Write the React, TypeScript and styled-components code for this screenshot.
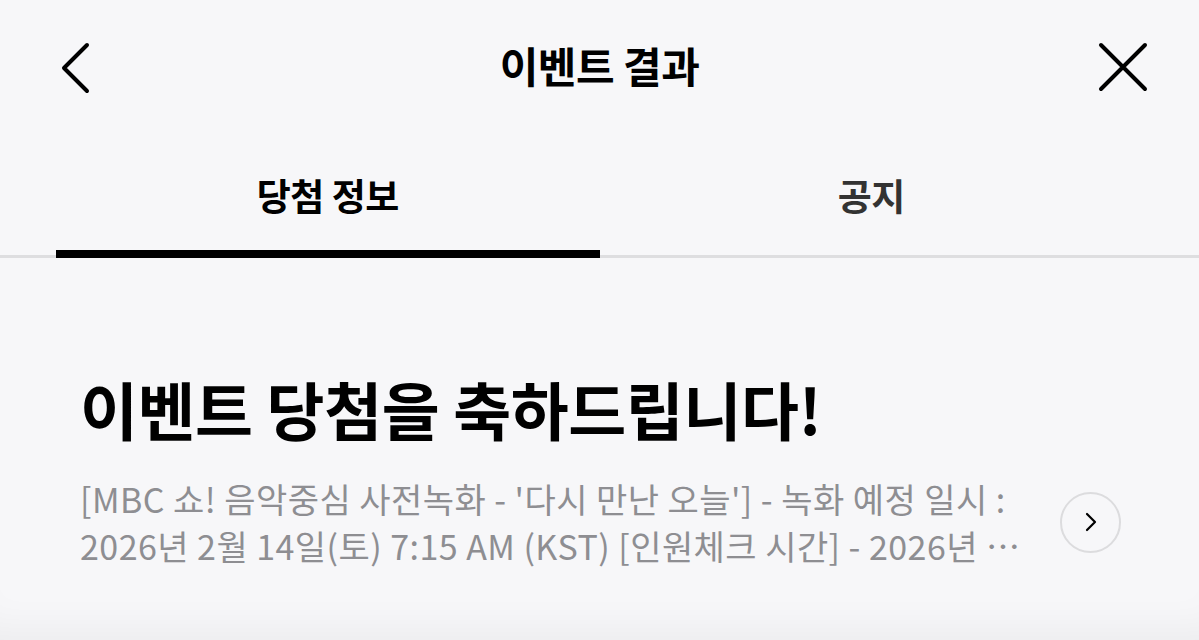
import React from "react";
import styled, { createGlobalStyle } from "styled-components";

const GlobalStyle = createGlobalStyle`
    html, body {
        margin: 0;
        padding: 0;
        background: #f7f7f9;
    }
    body {
        font-family: "Noto Sans CJK KR", "Noto Sans", sans-serif;
        color: #000;
    }
`;

const Page = styled.div`
    width: 1199px;
    height: 640px;
    overflow: hidden;
    background: #f7f7f9;
    display: flex;
    flex-direction: column;
`;

const Header = styled.header`
    height: 134px;
    display: grid;
    grid-template-columns: 1fr auto 1fr;
    align-items: center;
    padding: 0 48px;
`;

const IconButton = styled.button<{ $align: "start" | "end" }>`
    justify-self: ${(p) => p.$align};
    width: 56px;
    height: 56px;
    padding: 0;
    border: none;
    background: none;
    display: flex;
    align-items: center;
    justify-content: center;
    cursor: pointer;
`;

const Title = styled.h1`
    margin: 0;
    font-size: 42px;
    font-weight: 700;
    letter-spacing: -0.5px;
    line-height: 1;
    padding-bottom: 4px;
`;

const Tabs = styled.nav`
    display: flex;
    padding: 0 56px;
    border-bottom: 3px solid #dedee0;
    height: 121px;
`;

const Tab = styled.button<{ $active?: boolean }>`
    flex: 1;
    border: none;
    background: none;
    padding: 0;
    font-family: inherit;
    font-size: 37px;
    font-weight: 700;
    letter-spacing: -0.5px;
    color: ${(p) => (p.$active ? "#000" : "#333")};
    position: relative;
    cursor: pointer;
    &::after {
        content: "";
        position: absolute;
        left: 0;
        right: 0;
        bottom: -3px;
        height: 8px;
        background: ${(p) => (p.$active ? "#000" : "transparent")};
    }
`;

const Content = styled.section`
    flex: 1;
    padding: 110px 78px 0 80px;
    box-shadow: inset 0 -40px 40px -30px rgba(0, 0, 0, 0.05);
`;

const Heading = styled.h2`
    margin: 0 0 27px;
    font-size: 63px;
    font-weight: 700;
    letter-spacing: -0.4px;
    line-height: 80px;
`;

const Row = styled.div`
    display: flex;
    align-items: center;
    gap: 32px;
`;

const Desc = styled.p`
    margin: 0;
    flex: 1;
    font-size: 34px;
    line-height: 47px;
    color: #8e8e92;
    letter-spacing: 0.45px;
    display: -webkit-box;
    -webkit-line-clamp: 2;
    -webkit-box-orient: vertical;
    overflow: hidden;
`;

const CircleButton = styled.button`
    flex: none;
    width: 61px;
    height: 61px;
    border-radius: 50%;
    border: 2px solid #dcdcde;
    background: #f7f7f9;
    display: flex;
    align-items: center;
    justify-content: center;
    padding: 0;
    cursor: pointer;
`;

export default function App() {
    return (
        <Page>
            <GlobalStyle />
            <Header>
                <IconButton $align="start" aria-label="뒤로">
                    <svg width="56" height="56" viewBox="0 0 56 56" fill="none">
                        <path
                            d="M39 6 L16 29 L39 52"
                            stroke="#000"
                            strokeWidth="4"
                            strokeLinecap="round"
                            strokeLinejoin="round"
                        />
                    </svg>
                </IconButton>
                <Title>이벤트 결과</Title>
                <IconButton $align="end" aria-label="닫기">
                    <svg width="56" height="56" viewBox="0 0 56 56" fill="none">
                        <path
                            d="M6 6 L50 50 M50 6 L6 50"
                            stroke="#000"
                            strokeWidth="4"
                            strokeLinecap="round"
                        />
                    </svg>
                </IconButton>
            </Header>
            <Tabs>
                <Tab $active>당첨 정보</Tab>
                <Tab>공지</Tab>
            </Tabs>
            <Content>
                <Heading>이벤트 당첨을 축하드립니다!</Heading>
                <Row>
                    <Desc>
                        [MBC 쇼! 음악중심 사전녹화 - '다시 만난 오늘'] - 녹화 예정
                        일시 : 2026년 2월 14일(토) 7:15 AM (KST) [인원체크 시간] -
                        2026년 2월 14일(토) 6:30 AM (KST)
                    </Desc>
                    <CircleButton aria-label="자세히">
                        <svg width="24" height="24" viewBox="0 0 24 24" fill="none">
                            <path
                                d="M8 4 L16 12 L8 20"
                                stroke="#000"
                                strokeWidth="2.2"
                                strokeLinecap="round"
                                strokeLinejoin="round"
                            />
                        </svg>
                    </CircleButton>
                </Row>
            </Content>
        </Page>
    );
}
